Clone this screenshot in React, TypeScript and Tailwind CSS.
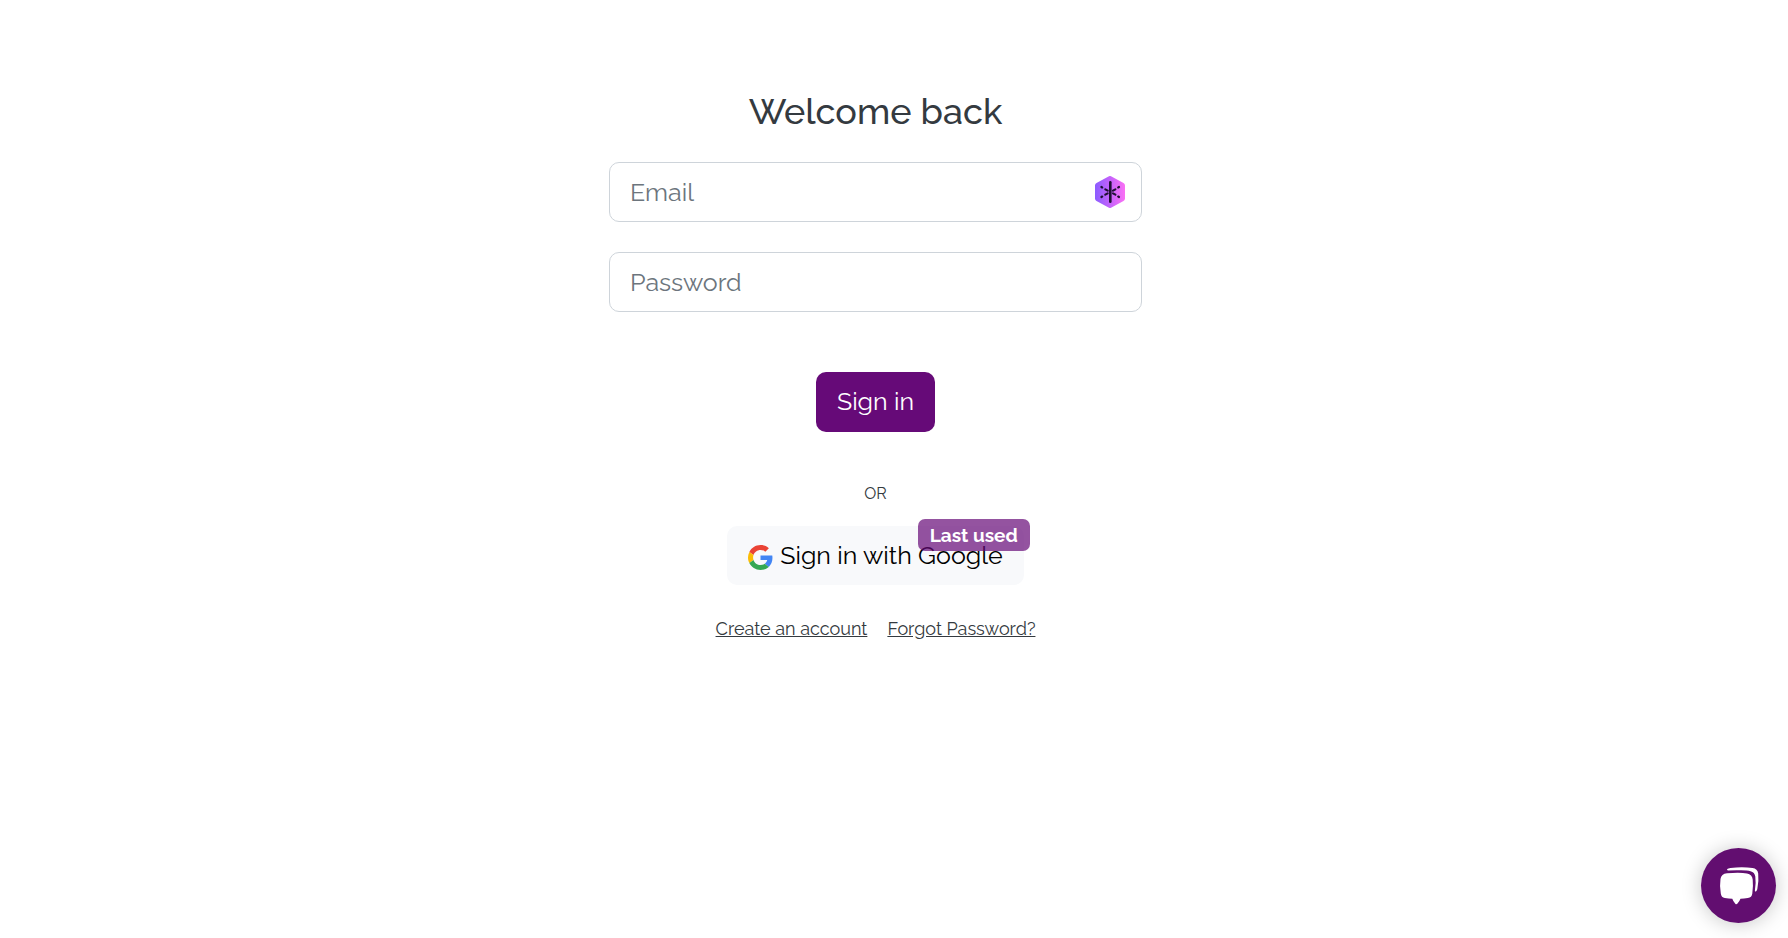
import { useState } from 'react';

function VaultIcon() {
  return (
    <svg viewBox="0 0 30 32" className="h-8 w-[30px]" aria-hidden="true">
      <defs>
        <linearGradient id="vault" x1="0" y1="0" x2="1" y2="0">
          <stop offset="0" stopColor="#8b5cff" />
          <stop offset="0.5" stopColor="#c462fb" />
          <stop offset="1" stopColor="#fb70f4" />
        </linearGradient>
      </defs>
      <path
        d="M13.500.4a3 3 0 0 1 3 0l12 6.600A3 3 0 0 1 30 9.600v12.800a3 3 0 0 1-1.500 2.600l-12 6.600a3 3 0 0 1-3 0L1.500 25A3 3 0 0 1 0 22.400V9.600A3 3 0 0 1 1.500 7z"
        fill="url(#vault)"
      />
      <g stroke="#1f1035" strokeLinecap="round" fill="none">
        <path d="M15.300 6.300v19.400" strokeWidth="2.600" />
        <path d="M6.400 11l.8.450M6.400 21l.8-.450M24 11l-.8.450M24 21l-.8-.450" strokeWidth="2.200" />
        <path d="M10.300 13.300l2.400 1.400M10.300 18.700l2.400-1.400M20.400 13.300l-2.400 1.400M20.400 18.700l-2.400-1.400" strokeWidth="2.100" />
      </g>
    </svg>
  );
}

function GoogleIcon() {
  return (
    <svg viewBox="0 0 48 48" className="mt-1 size-[25px] shrink-0" aria-hidden="true">
      <path fill="#EA4335" d="M24 9.500c3.540 0 6.710 1.220 9.210 3.600l6.850-6.850C35.900 2.380 30.470 0 24 0 14.620 0 6.510 5.380 2.560 13.220l7.980 6.190C12.430 13.720 17.740 9.500 24 9.500z" />
      <path fill="#4285F4" d="M46.980 24.550c0-1.570-.15-3.090-.38-4.550H24v9.020h12.940c-.58 2.960-2.260 5.480-4.780 7.180l7.730 6c4.510-4.180 7.090-10.360 7.090-17.650z" />
      <path fill="#FBBC05" d="M10.530 28.590c-.48-1.450-.76-2.990-.76-4.590s.27-3.140.76-4.590l-7.980-6.190C.92 16.460 0 20.120 0 24c0 3.880.92 7.540 2.560 10.780l7.970-6.190z" />
      <path fill="#34A853" d="M24 48c6.480 0 11.930-2.130 15.890-5.810l-7.730-6c-2.150 1.450-4.920 2.300-8.160 2.300-6.260 0-11.570-4.220-13.470-9.910l-7.980 6.190C6.510 42.620 14.620 48 24 48z" />
    </svg>
  );
}

function ChatIcon() {
  return (
    <svg viewBox="0 0 75 75" className="size-full" aria-hidden="true">
      <g fill="#fff">
        <path d="M26 25.200Q39 24 46 25.400Q51.200 26.200 51.700 31.500Q52.400 38 51.300 45.500Q50.900 49.500 46.800 50Q43 50.500 39.500 50.700Q38.400 53.500 36.300 55.800Q35.300 56.700 34.300 55.700Q32.200 53.400 31.300 50.700Q27.600 50.600 23.800 50Q20.300 49.500 19.800 45.500Q18.500 37.500 19.500 31Q20.200 25.800 26 25.200Z" />
        <path d="M27.200 22.500Q25.300 22.300 26.300 21.100Q27 20.200 29.500 19.900Q42 18.800 51.500 20Q56.500 20.600 57.200 25.500Q58 33.500 56.300 41.200Q55.900 42.700 54.900 43.500Q53.700 44 53.900 42.300Q55.200 35 54.300 28.500Q53.700 24.300 49.500 23.200Q46.500 22.400 40 22.300Q33 22.100 27.200 22.500Z" />
      </g>
    </svg>
  );
}

const fieldClass =
  'h-[60px] w-full rounded-[10px] border border-[#ced4da] bg-white px-5 text-[25px] text-[#343a40] outline-none placeholder:text-[#6c757d] focus:border-[#660a78]';

export default function App() {
  const [email, setEmail] = useState('');
  const [password, setPassword] = useState('');

  return (
    <main className="flex min-h-screen flex-col items-center bg-white pt-[84px] pr-[37px] font-['Raleway','Lato',sans-serif] text-[#343a40]">
      <form className="flex w-full max-w-[533px] flex-col items-center" onSubmit={(e) => e.preventDefault()}>
        <h1 className="mb-6 text-4xl leading-[54px] font-medium">Welcome back</h1>
        <div className="relative mb-[30px] w-full">
          <input
            type="email"
            aria-label="Email"
            placeholder="Email"
            value={email}
            onChange={(e) => setEmail(e.target.value)}
            className={fieldClass}
          />
          <button type="button" aria-label="Fill from password manager" className="absolute top-[14px] right-[17px]">
            <VaultIcon />
          </button>
        </div>
        <input
          type="password"
          aria-label="Password"
          placeholder="Password"
          value={password}
          onChange={(e) => setPassword(e.target.value)}
          className={fieldClass}
        />
        <button type="submit" className="mt-[60px] h-[60px] rounded-[10px] bg-[#660a78] px-[21px] text-[25px] text-white">
          Sign in
        </button>
      </form>
      <p className="mt-[50px] text-base leading-6">OR</p>
      <div className="relative mt-5">
        <button type="button" className="flex h-[59px] items-center gap-[7px] rounded-[10px] bg-[#f8f9fb] px-[21px] text-[25px] text-black">
          <GoogleIcon />
          Sign in with Google
        </button>
        <span className="absolute -top-[7px] -right-[6px] flex h-8 items-center rounded-[7px] bg-[#660a78]/70 px-3 text-[19px] font-bold whitespace-nowrap text-white">
          Last used
        </span>
      </div>
      <nav className="mt-[30px] flex gap-5 text-[18px] leading-7">
        <a href="#create" className="underline">Create an account</a>
        <a href="#forgot" className="underline">Forgot Password?</a>
      </nav>
      <button
        type="button"
        aria-label="Open chat"
        className="fixed right-3 bottom-[15px] size-[75px] rounded-full bg-[#620e70] shadow-[0_1px_20px_rgba(0,0,0,0.22)]"
      >
        <ChatIcon />
      </button>
    </main>
  );
}
